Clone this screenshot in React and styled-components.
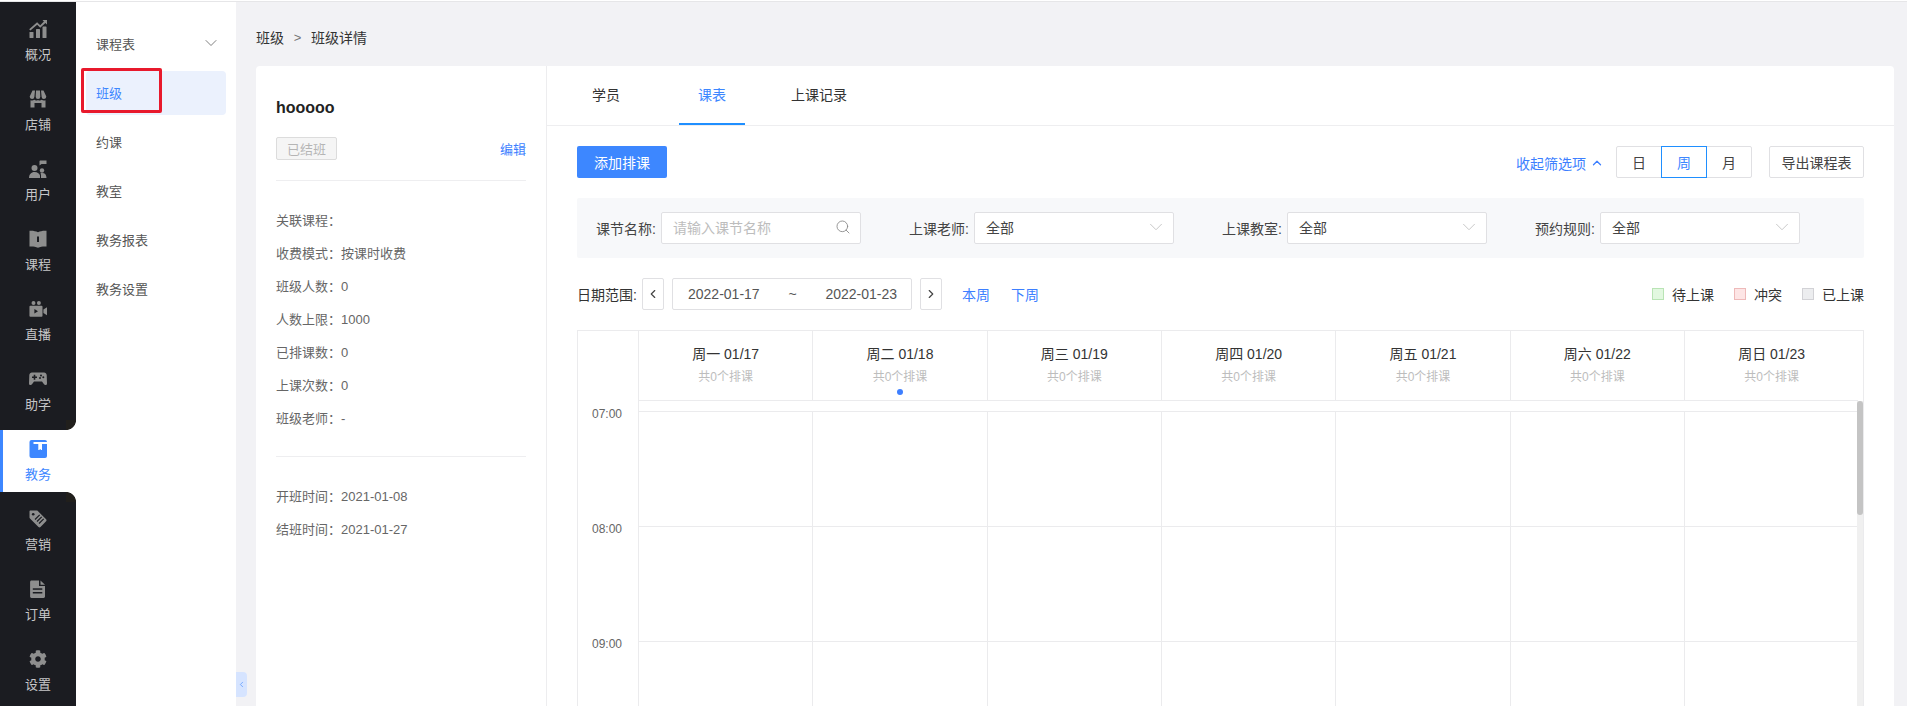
import React from "react";
import styled, { createGlobalStyle } from "styled-components";
import { ChevronDown, ChevronUp, ChevronLeft, ChevronRight, Search } from "lucide-react";
import { FaCog } from "react-icons/fa";

const Global = createGlobalStyle`
  html, body { margin: 0; padding: 0; height: 706px; overflow: hidden; background: #f2f2f5; }
  * { box-sizing: border-box; }
  body { font-family: "Liberation Sans", "Noto Sans CJK SC", sans-serif; font-size: 14px; color: #333; }
`;

const Page = styled.div`
  width: 1907px; height: 706px; display: flex; flex-direction: column; overflow: hidden; background: #f2f2f5;
`;
const TopStrip = styled.div`
  height: 2px; background: #fff; border-bottom: 1px solid #e6e6e8; flex: none;
`;
const Body = styled.div`
  flex: 1; display: flex; min-height: 0;
`;

/* rail */
const Rail = styled.nav`
  width: 76px; flex: none; background: #1b1c21; display: flex; flex-direction: column;
`;
const RailItem = styled.div`
  height: 70px; padding-top: 18px; display: flex; flex-direction: column; align-items: center; color: #c6c6c8; font-size: 13px;
  svg { display: block; width: 18px; height: 18px; color: #8e8e8e; }
`;
const RailLabel = styled.span`
  display: block; line-height: 18px; margin-top: 8px;
`;
const RailActive = styled.div`
  position: relative; height: 62px; margin-top: 8px; padding-top: 10px; background: #fff; border-left: 3px solid #3d87ff;
  display: flex; flex-direction: column; align-items: center; color: #3d87ff; font-size: 13px; padding-right: 3px;
  svg { display: block; width: 18px; height: 18px; }
  &::before, &::after { content: ""; position: absolute; right: 0; width: 10px; height: 10px; }
  &::before { top: -10px; background: radial-gradient(circle at 0 0, #211f1c 9.6px, #fff 10.4px); }
  &::after { bottom: -10px; background: radial-gradient(circle at 0 100%, #211f1c 9.6px, #fff 10.4px); z-index: 1; }
`;

/* sub navigation */
const SubNav = styled.nav`
  position: relative; width: 160px; flex: none; background: #fff; padding: 20px 10px 0;
  display: flex; flex-direction: column; gap: 5px;
`;
const SubItem = styled.div`
  height: 44px; padding: 0 10px 2px; border-radius: 4px; display: flex; align-items: center; justify-content: space-between;
  font-size: 13px; color: ${p => (p.$active ? "#3d87ff" : "#555")}; background: ${p => (p.$active ? "#ebf1fd" : "transparent")};
  svg { margin-right: -5px; }
`;
const RedMark = styled.div`
  position: absolute; left: 5px; top: 66px; width: 81px; height: 45px; border: 3px solid #e8192c; border-radius: 2px;
`;
const Collapse = styled.div`
  position: absolute; left: 100%; top: 670px; width: 11px; height: 25px; background: #d6e4ff; border-radius: 0 4px 4px 0;
  display: flex; align-items: center; justify-content: center; color: #3d87ff;
`;

/* main */
const Main = styled.main`
  flex: 1; min-width: 0; padding: 0 13px 0 20px; display: flex; flex-direction: column;
`;
const Crumbs = styled.div`
  height: 64px; flex: none; padding-top: 6px; display: flex; align-items: center; font-size: 14px; color: #333;
`;
const CrumbSep = styled.span`
  width: 27px; text-align: center; color: #777; font-size: 13px;
`;
const Card = styled.div`
  flex: 1; min-height: 0; display: flex; background: #fff; border-radius: 4px 4px 0 0; overflow: hidden;
`;

/* info panel */
const Info = styled.aside`
  width: 291px; flex: none; padding: 30px 20px 0; border-right: 1px solid #ededef;
`;
const Name = styled.div`
  font-size: 16px; font-weight: 700; line-height: 24px; color: #222;
`;
const StatusRow = styled.div`
  margin-top: 17px; padding-bottom: 20px; border-bottom: 1px solid #eeeef0; display: flex; align-items: center; justify-content: space-between;
`;
const Tag = styled.span`
  width: 61px; height: 23px; display: flex; align-items: center; justify-content: center; font-size: 13px; color: #b5b5b5;
  background: #f5f5f5; border: 1px solid #dcdcdc; border-radius: 2px;
`;
const Link = styled.span`
  color: #3d7fff; font-size: ${p => p.$size || 14}px; white-space: nowrap;
`;
const InfoGroup = styled.div`
  padding: 23px 0 21px; border-bottom: ${p => (p.$line ? "1px solid #eeeef0" : "none")};
`;
const InfoRow = styled.div`
  height: 33px; line-height: 33px; font-size: 13px; color: #666; white-space: nowrap;
`;

/* right */
const Content = styled.section`
  flex: 1; min-width: 0; display: flex; flex-direction: column;
`;
const Tabs = styled.div`
  height: 60px; flex: none; display: flex; align-items: stretch; padding-left: ${p => p.$pad}px; border-bottom: 1px solid #eeeef0;
`;
const Tab = styled.div`
  margin-left: ${p => p.$gap || 0}px; padding: 0 19px; height: 59px; display: flex; align-items: center; padding-bottom: 1px; font-size: 14px;
  color: ${p => (p.$active ? "#3d87ff" : "#333")};
  border-bottom: 2px solid ${p => (p.$active ? "#1f8fff" : "transparent")};
`;
const Pane = styled.div`
  flex: 1; min-height: 0; padding: 20px 30px 0 30px; display: flex; flex-direction: column; gap: 20px;
`;
const Toolbar = styled.div`
  height: 32px; flex: none; display: flex; align-items: center;
`;
const Primary = styled.button`
  width: 90px; height: 32px; border: 0; border-radius: 2px; background: #3d87ff; color: #fff; font: inherit; padding: 0;
`;
const ToggleFilter = styled.span`
  margin-left: auto; margin-top: 2px; display: flex; align-items: center; gap: 4px; color: #3d7fff; font-size: 14px;
`;
const Segments = styled.div`
  margin-left: 12px; display: flex; height: 32px;
`;
const Segment = styled.div`
  width: 46px; margin-left: -1px; height: 32px; display: flex; align-items: center; justify-content: center; font-size: 14px;
  background: #fff; position: relative; z-index: ${p => (p.$active ? 1 : 0)};
  color: ${p => (p.$active ? "#3d87ff" : "#444")};
  border: 1px solid ${p => (p.$active ? "#1f8fff" : "#e0e0e3")};
  &:first-child { margin-left: 0; border-radius: 2px 0 0 2px; }
  &:last-child { border-radius: 0 2px 2px 0; }
`;
const Outline = styled.div`
  margin-left: 17px; width: 95px; height: 32px; border: 1px solid #e0e0e3; border-radius: 2px; display: flex; align-items: center; justify-content: center; color: #444;
`;

const Filters = styled.div`
  height: 60px; flex: none; background: #f7f8fa; border-radius: 2px; padding: 14px 19px; display: flex;
`;
const Field = styled.div`
  width: 313px; flex: none; display: flex; align-items: center;
`;
const FieldLabel = styled.span`
  width: 65px; flex: none; color: #444; font-size: 14px; white-space: nowrap;
`;
const Control = styled.div`
  width: 200px; height: 32px; flex: none; background: #fff; border: 1px solid #e0e0e3; border-radius: 2px; padding: 0 11px 2px;
  display: flex; align-items: center; justify-content: space-between; font-size: 14px; color: ${p => (p.$placeholder ? "#bdbdbd" : "#444")};
  svg { color: ${p => (p.$placeholder ? "#888" : "#c4c4c4")}; margin-right: ${p => (p.$placeholder ? -2 : -5)}px; }
`;

const DateRow = styled.div`
  height: 32px; flex: none; display: flex; align-items: center;
`;
const DateLabel = styled.span`
  width: 65px; flex: none; color: #333;
`;
const Stepper = styled.div`
  width: 22px; height: 32px; flex: none; border: 1px solid #e0e0e3; border-radius: 2px; display: flex; align-items: center; justify-content: center; color: #444;
`;
const Range = styled.div`
  width: 240px; height: 32px; margin: 0 8px; border: 1px solid #e0e0e3; border-radius: 2px; padding: 0 14px 0 15px; display: flex; align-items: center; justify-content: space-between; color: #555;
`;
const WeekLink = styled(Link)`
  margin-left: ${p => p.$gap}px;
`;
const Legend = styled.div`
  margin-left: auto; display: flex; align-items: center; gap: 20px;
`;
const LegendItem = styled.div`
  display: flex; align-items: center; gap: 8px; color: #333;
`;
const Swatch = styled.i`
  display: block; width: 12px; height: 12px; background: ${p => p.$bg}; border: 1px solid ${p => p.$line};
`;

/* calendar */
const Calendar = styled.div`
  flex: 1; min-height: 0; border: 1px solid #ebebed; border-bottom: 0; display: flex; flex-direction: column; overflow: hidden;
`;
const CalHead = styled.div`
  height: 70px; flex: none; display: grid; grid-template-columns: 60px repeat(7, 174.33px) 1fr;
`;
const Corner = styled.div``;
const DayHead = styled.div`
  position: relative; border-left: 1px solid #ebebed; border-bottom: 1px solid #ebebed; display: flex; flex-direction: column; align-items: center; padding-top: 13px;
`;
const DayTitle = styled.span`
  font-size: 14px; line-height: 20px; color: #333; white-space: nowrap;
`;
const DaySub = styled.span`
  font-size: 12px; line-height: 18px; margin-top: 4px; color: #bdbdbd; white-space: nowrap;
`;
const TodayDot = styled.i`
  position: absolute; bottom: 5px; left: 50%; margin-left: -3px; width: 6px; height: 6px; border-radius: 50%; background: #3d7fff;
`;
const CalBody = styled.div`
  flex: 1; min-height: 0; display: flex; overflow: hidden;
`;
const Times = styled.div`
  width: 60px; flex: none; padding-top: 3px;
`;
const TimeLabel = styled.div`
  height: 115px; line-height: 20px; padding-left: 14px; font-size: 12px; color: #666;
`;
const Grid = styled.div`
  flex: 1; min-width: 0; display: flex; flex-direction: column;
`;
const Band = styled.div`
  height: 11px; flex: none; border-left: 1px solid #ebebed; border-bottom: 1px solid #ebebed;
`;
const Row = styled.div`
  height: 115px; flex: none; display: grid; grid-template-columns: repeat(6, 174.33px) 1fr;
`;
const Cell = styled.div`
  border-left: 1px solid #ebebed; border-bottom: 1px solid #ebebed;
`;
const Track = styled.div`
  width: 6px; flex: none; background: #f0f0f0;
`;
const Thumb = styled.div`
  height: 114px; background: #c4c4c4; border-radius: 3px;
`;

const GRAY = "currentColor";
const DARK = "#1b1c21";

const IconChart = () => (
  <svg viewBox="0 0 18 18"><g fill={GRAY}>
    <rect x="0.5" y="12" width="4" height="6" rx="0.6" /><rect x="7" y="9" width="4" height="9" rx="0.6" /><rect x="13.5" y="6.5" width="4" height="11.5" rx="0.6" />
    <path d="M13.5 0H18v4.5l-1.6-1.6-5.2 4.9-3-3L1.4 10.600 0.200 9.200 8.100 2.200l3.100 3 3.700-3.600z" /></g></svg>
);
const IconStore = () => (
  <svg viewBox="0 0 18 18"><g fill={GRAY}>
    <path d="M3.500 0.500H6L5.400 6.800a2.300 2.300 0 0 1-4.700-.2z" /><path d="M7 0.500h4l.3 6.300a2.300 2.300 0 0 1-4.600 0z" /><path d="M12 0.500h2.500l2.800 6.100a2.300 2.300 0 0 1-4.700.2z" />
    <path d="M1.500 10.300c1.500.5 2.800.3 3.800-.5 1.100 1 2.500 1 3.700.1 1.200.9 2.600.9 3.700-.1 1 .8 2.300 1 3.800.5V17.500H12.500V13h-7v4.500h-4z" /></g></svg>
);
const IconUsers = () => (
  <svg viewBox="0 0 18 18"><g fill={GRAY}>
    <circle cx="5.500" cy="8" r="3" /><path d="M0 18c0-3.500 2.200-6 5.500-6s5 2 5.500 3.500V18z" />
    <circle cx="13" cy="10.500" r="2.200" /><path d="M12 18v-3c0-.6-.3-1.200-.6-1.500.6-.3 1.100-.4 1.800-.4 2.800 0 4.300 2 4.300 4.900z" />
    <path d="M10.500 1.500c0-.6.400-1 1-1h6v3.500h-5l-2 1.500z" /></g></svg>
);
const IconBook = () => (
  <svg viewBox="0 0 18 18">
    <path fill={GRAY} d="M0.500 0.800C3.500 .5 6.500 1 9 2.200 11.500 1 14.500 .5 17.500 .8V16.500c-3-.3-6 .2-8.500 1.300C6.500 16.700 3.500 16.200 .5 16.500z" />
    <rect x="8" y="6.500" width="2" height="5.500" fill={DARK} /></svg>
);
const IconVideo = () => (
  <svg viewBox="0 0 20 18"><g fill={GRAY}>
    <circle cx="5" cy="2.300" r="2.200" /><circle cx="11" cy="2.300" r="2.200" />
    <rect x="0.500" y="5.500" width="14.500" height="12" rx="1" /><path d="M16 9.500l4-2.500v9l-4-2.500z" /></g>
    <path fill={DARK} d="M6 9v5l4-2.500z" /></svg>
);
const IconPad = () => (
  <svg viewBox="0 0 18 18">
    <path fill={GRAY} d="M3 2.500h12c1.500 0 2.500 1 2.700 2.500l.3 8.500c0 1.800-2.200 2-3 .8L13 11.500H5L3 14.300c-.8 1.200-3 1-3-.8L.3 5C.5 3.500 1.500 2.500 3 2.500z" />
    <path fill={DARK} d="M4.700 4.800h1.600v1.700H8v1.600H6.300v1.700H4.700V8.100H3V6.500h1.700z" />
    <circle cx="12" cy="5.500" r="1" fill={DARK} /><circle cx="14.300" cy="7.300" r="1" fill={DARK} /><circle cx="11" cy="8" r="1" fill={DARK} /></svg>
);
const IconAcademic = () => (
  <svg viewBox="0 0 18 18">
    <rect x="0.500" y="0" width="17.500" height="18" rx="2" fill="#3d87ff" />
    <path fill="#fff" d="M4.500 2h13.500v2h-5v6h-.9l-.9-1-1 1h-.9V4H4.500z" /></svg>
);
const IconTag = () => (
  <svg viewBox="0 0 18 18">
    <path fill={GRAY} d="M1.200 0.500h6.600c.4 0 .7.100 1 .400l8.300 8.400c.6.600.6 1.400 0 2l-5.600 5.800c-.6.600-1.400.6-2 0L1 8.500C.7 8.200.500 7.900.500 7.500V1.200C.500 .8.800 .5 1.200 .5z" />
    <circle cx="4.200" cy="4.200" r="1.300" fill={DARK} />
    <path stroke={DARK} strokeWidth="1.200" d="M10.700 4.800L6 9.500M12.700 6.800L8 11.500M14.700 8.800L10 13.500" /></svg>
);
const IconDoc = () => (
  <svg viewBox="0 0 18 18">
    <path fill={GRAY} d="M2.500 0.500h7.500v5.500h6V16.500c0 .8-.6 1.400-1.400 1.400H2.500c-.8 0-1.400-.6-1.400-1.400V2c0-.8.600-1.500 1.400-1.500z" />
    <path fill={GRAY} d="M11.500 0.500l4.500 4.200h-4.500z" />
    <rect x="3.800" y="8.300" width="9.500" height="1.500" fill={DARK} /><rect x="3.800" y="12" width="9.500" height="1.500" fill={DARK} /></svg>
);

const railTop = [
  ["概况", IconChart], ["店铺", IconStore], ["用户", IconUsers], ["课程", IconBook], ["直播", IconVideo], ["助学", IconPad],
];
const railBottom = [["营销", IconTag], ["订单", IconDoc], ["设置", FaCog]];

const subs = ["班级", "约课", "教室", "教务报表", "教务设置"];
const stats = ["关联课程：", "收费模式：按课时收费", "班级人数：0", "人数上限：1000", "已排课数：0", "上课次数：0", "班级老师：-"];
const days = ["周一 01/17", "周二 01/18", "周三 01/19", "周四 01/20", "周五 01/21", "周六 01/22", "周日 01/23"];
const selects = ["上课老师:", "上课教室:", "预约规则:"];
const hours = ["07:00", "08:00", "09:00"];

export default function App() {
  return (
    <Page>
      <Global />
      <TopStrip />
      <Body>
        <Rail>
          {railTop.map(([label, Icon]) => (
            <RailItem key={label}><Icon /><RailLabel>{label}</RailLabel></RailItem>
          ))}
          <RailActive><IconAcademic /><RailLabel>教务</RailLabel></RailActive>
          {railBottom.map(([label, Icon]) => (
            <RailItem key={label}><Icon /><RailLabel>{label}</RailLabel></RailItem>
          ))}
        </Rail>
        <SubNav>
          <SubItem>课程表<ChevronDown size={20} strokeWidth={1} color="#666" /></SubItem>
          {subs.map((s, i) => <SubItem key={s} $active={i === 0}>{s}</SubItem>)}
          <RedMark />
          <Collapse><ChevronLeft size={9} strokeWidth={1.6} /></Collapse>
        </SubNav>
        <Main>
          <Crumbs>班级<CrumbSep>&gt;</CrumbSep>班级详情</Crumbs>
          <Card>
            <Info>
              <Name>hooooo</Name>
              <StatusRow><Tag>已结班</Tag><Link $size={13}>编辑</Link></StatusRow>
              <InfoGroup $line>
                {stats.map(t => <InfoRow key={t}>{t}</InfoRow>)}
              </InfoGroup>
              <InfoGroup>
                <InfoRow>开班时间：2021-01-08</InfoRow>
                <InfoRow>结班时间：2021-01-27</InfoRow>
              </InfoGroup>
            </Info>
            <Content>
              <Tabs $pad={26}>
                <Tab>学员</Tab>
                <Tab $gap={40} $active>课表</Tab>
                <Tab $gap={27}>上课记录</Tab>
              </Tabs>
              <Pane>
                <Toolbar>
                  <Primary>添加排课</Primary>
                  <ToggleFilter>收起筛选项<ChevronUp size={14} strokeWidth={2.2} /></ToggleFilter>
                  <Segments>
                    <Segment>日</Segment>
                    <Segment $active>周</Segment>
                    <Segment>月</Segment>
                  </Segments>
                  <Outline>导出课程表</Outline>
                </Toolbar>
                <Filters>
                  <Field>
                    <FieldLabel>课节名称:</FieldLabel>
                    <Control $placeholder>请输入课节名称<Search size={16} strokeWidth={1.3} /></Control>
                  </Field>
                  {selects.map(l => (
                    <Field key={l}>
                      <FieldLabel>{l}</FieldLabel>
                      <Control>全部<ChevronDown size={22} strokeWidth={1} /></Control>
                    </Field>
                  ))}
                </Filters>
                <DateRow>
                  <DateLabel>日期范围:</DateLabel>
                  <Stepper><ChevronLeft size={14} strokeWidth={2} /></Stepper>
                  <Range><span>2022-01-17</span><span>~</span><span>2022-01-23</span></Range>
                  <Stepper><ChevronRight size={14} strokeWidth={2} /></Stepper>
                  <WeekLink $gap={20}>本周</WeekLink>
                  <WeekLink $gap={21}>下周</WeekLink>
                  <Legend>
                    <LegendItem><Swatch $bg="#e2f8e0" $line="#b9e4b5" />待上课</LegendItem>
                    <LegendItem><Swatch $bg="#fde5e5" $line="#eeb9b9" />冲突</LegendItem>
                    <LegendItem><Swatch $bg="#ecedef" $line="#d2d2d6" />已上课</LegendItem>
                  </Legend>
                </DateRow>
                <Calendar>
                  <CalHead>
                    <Corner />
                    {days.map((d, i) => (
                      <DayHead key={d}>
                        <DayTitle>{d}</DayTitle>
                        <DaySub>共0个排课</DaySub>
                        {i === 1 && <TodayDot />}
                      </DayHead>
                    ))}
                    <Corner />
                  </CalHead>
                  <CalBody>
                    <Times>{hours.map(h => <TimeLabel key={h}>{h}</TimeLabel>)}</Times>
                    <Grid>
                      <Band />
                      {hours.map(h => (
                        <Row key={h}>{days.map(d => <Cell key={d} />)}</Row>
                      ))}
                    </Grid>
                    <Track><Thumb /></Track>
                  </CalBody>
                </Calendar>
              </Pane>
            </Content>
          </Card>
        </Main>
      </Body>
    </Page>
  );
}
